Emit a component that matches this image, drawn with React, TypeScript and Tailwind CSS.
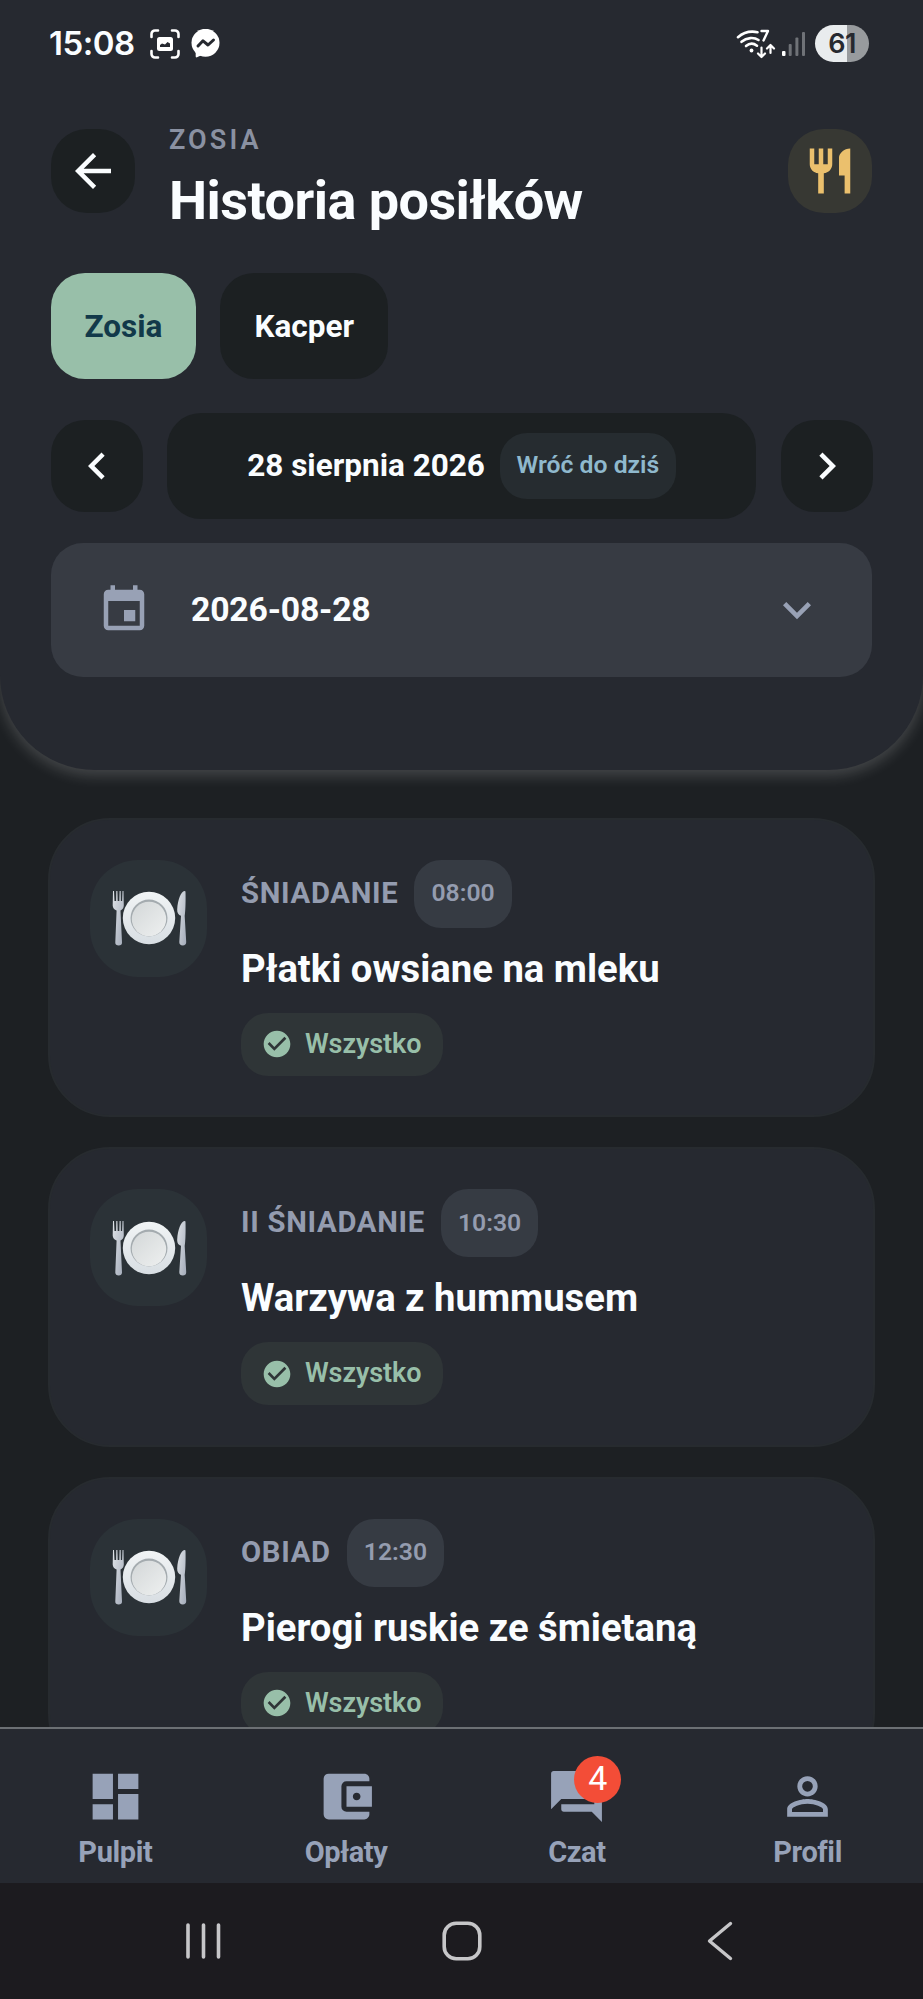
import React from "react";
import {
  MdAccountBalanceWallet,
  MdArrowBack,
  MdCheckCircle,
  MdChevronLeft,
  MdChevronRight,
  MdDashboard,
  MdEvent,
  MdForum,
  MdKeyboardArrowDown,
  MdPersonOutline,
  MdRestaurant,
} from "react-icons/md";

interface Meal {
  id: number;
  type: string;
  time: string;
  name: string;
  status: string;
}

const meals: Meal[] = [
  { id: 1, type: "ŚNIADANIE", time: "08:00", name: "Płatki owsiane na mleku", status: "Wszystko" },
  { id: 2, type: "II ŚNIADANIE", time: "10:30", name: "Warzywa z hummusem", status: "Wszystko" },
  { id: 3, type: "OBIAD", time: "12:30", name: "Pierogi ruskie ze śmietaną", status: "Wszystko" },
];

const tabs = [
  { label: "Pulpit", icon: MdDashboard, badge: 0 },
  { label: "Opłaty", icon: MdAccountBalanceWallet, badge: 0 },
  { label: "Czat", icon: MdForum, badge: 4 },
  { label: "Profil", icon: MdPersonOutline, badge: 0 },
];

const StatusBar: React.FC = () => (
  <div className="flex h-[87px] items-center justify-between pr-[54px] pl-[49px]">
    <div className="flex items-center">
      <span className="w-[101px] font-['Inter'] text-[33px] leading-none font-semibold tracking-[-0.5px]">15:08</span>
      <svg className="h-[30px] w-[30px]" viewBox="0 0 30 30" fill="none">
        <path
          d="M1.5 8V5A3.5 3.5 0 0 1 5 1.5h3M22 1.5h3A3.5 3.5 0 0 1 28.5 5v3M28.5 22v3a3.5 3.5 0 0 1-3.5 3.5h-3M8 28.5H5A3.5 3.5 0 0 1 1.5 25v-3"
          stroke="#fff"
          strokeWidth="2.6"
          strokeLinecap="round"
        />
        <rect x="7" y="8" width="16" height="14" rx="2.5" fill="#fff" />
        <path d="M10 18v-2l2-1.500 3 1 2.500-2.500 2.500 1.500V18z" fill="#262930" />
      </svg>
      <svg className="ml-[11px] h-[29px] w-[29px]" viewBox="0 0 29 29">
        <circle cx="14.5" cy="13.8" r="14" fill="#fff" />
        <path d="M4.700 20v7.500c0 .8.600 1.100 1.300.8l6-2.800z" fill="#fff" />
        <path d="M7 17l5-5.200 5 4.200 5.500-5" fill="none" stroke="#262930" strokeWidth="3" strokeLinejoin="round" strokeLinecap="round" />
      </svg>
    </div>
    <div className="flex items-center">
      <svg className="h-[30px] w-[40px]" viewBox="0 0 40 30" fill="none" stroke="#fff" strokeWidth="2.600" strokeLinecap="round">
        <path d="M2 8.200C8 3 14.500 1.800 21.500 3.200" />
        <path d="M5.500 12.800c5.300-4.500 12.500-4.800 17-1.800" />
        <path d="M10 17c3.500-3 7.500-3 11-.3" />
        <circle cx="15.500" cy="21.500" r="1.900" fill="#fff" stroke="none" />
        <path d="M25.500 2H32l-4.500 9.500" strokeWidth="2.400" strokeLinejoin="round" />
        <path d="M25.500 18.500v9M22 24.500l3.500 3.500 3.500-3.500M34.500 24v-7.500M31 19.500l3.500-3.500 3.500 3.500" strokeWidth="2.200" strokeLinejoin="round" />
      </svg>
      <svg className="ml-[6px] h-[26px] w-[24px]" viewBox="0 0 24 26">
        <rect x="0" y="20" width="3.500" height="5" rx="1" fill="#fff" />
        <rect x="6.700" y="13" width="3" height="12" rx="1" fill="#6f7277" />
        <rect x="13.400" y="6.500" width="3" height="18.500" rx="1" fill="#6f7277" />
        <rect x="20" y="1" width="3" height="24" rx="1" fill="#6f7277" />
      </svg>
      <div className="ml-[9px] flex h-[37px] w-[54px] items-center justify-center overflow-hidden rounded-full bg-[linear-gradient(to_right,#e9ecee_60%,#989b9e_60%)] font-['Inter'] text-[27px] leading-none font-semibold tracking-[-0.5px] text-[#262930]">
        61
      </div>
    </div>
  </div>
);

const PlateIcon: React.FC = () => (
  <svg className="h-[58px] w-[76px]" viewBox="0 0 76 58">
    <defs>
      <linearGradient id="metal" x1="0" y1="0" x2="1" y2="1">
        <stop offset="0" stopColor="#dfe3e7" />
        <stop offset="1" stopColor="#a3abb9" />
      </linearGradient>
      <linearGradient id="rim" x1="0" y1="0" x2="0" y2="1">
        <stop offset="0" stopColor="#f1f4f5" />
        <stop offset="1" stopColor="#d8dee3" />
      </linearGradient>
      <linearGradient id="dish" x1="0" y1="0" x2="1" y2="1">
        <stop offset="0" stopColor="#d3d7d8" />
        <stop offset="1" stopColor="#eef0f0" />
      </linearGradient>
    </defs>
    <path
      d="M2 2h1l.5 10h1.600l.2-10h1.100l.3 10h1.600l.3-10h1.100l.2 10h1.200L11.500 2h1l.3 14.500c0 2.600-1.600 4.200-3.300 4.900l1.500 32c.1 2.200-1.300 3-3.300 3s-3.500-.8-3.400-3L5.600 21.400c-2.200-.7-3.800-2.300-3.900-4.900z"
      fill="url(#metal)"
    />
    <circle cx="38" cy="29" r="26.200" fill="url(#rim)" />
    <circle cx="38" cy="29" r="18.500" fill="#a4abaf" />
    <circle cx="38" cy="30" r="17.200" fill="url(#dish)" />
    <path
      d="M73.500 2c-3.600.8-6.700 8.500-7.300 18.500-.2 3.500 1.200 5.300 3.800 6.300L68.300 53c-.1 2.400 1.300 3.400 3.500 3.400s3.500-1 3.400-3.400L73.700 27c1-6.500 1-18 .8-24.200 0-.6-.4-.9-1-.8z"
      fill="url(#metal)"
    />
  </svg>
);

const MealCard: React.FC<{ meal: Meal }> = ({ meal }) => (
  <div className="flex h-[299.6px] shrink-0 rounded-[62px] border-2 border-[#272b2f] bg-[#262930] px-[40px] pt-[40px]">
    <div className="flex h-[117px] w-[117px] shrink-0 items-center justify-center rounded-[48px] bg-[#2b3237]">
      <PlateIcon />
    </div>
    <div className="ml-[34px] flex flex-col items-start">
      <div className="flex h-[68px] items-center gap-[16px]">
        <span className="text-[29.25px] leading-none font-bold tracking-[0.7px] text-[#949caf]">{meal.type}</span>
        <span className="flex h-[68px] items-center rounded-[27px] bg-[#363b43] px-[17px] text-[24.75px] leading-none font-semibold text-[#949caf]">
          {meal.time}
        </span>
      </div>
      <h2 className="mt-[18px] text-[38.25px] leading-[46px] font-bold text-[#fafdff]">{meal.name}</h2>
      <div className="mt-[21px] flex h-[63px] items-center gap-[12px] rounded-[27px] bg-[#2f3537] pr-[22px] pl-[20px] text-[#98bfa9]">
        <MdCheckCircle className="h-[32px] w-[32px]" />
        <span className="text-[27px] leading-none font-semibold tracking-[-0.1px]">{meal.status}</span>
      </div>
    </div>
  </div>
);

const App: React.FC = () => {
  return (
    <div className="flex h-[1999px] w-[923px] flex-col overflow-hidden bg-[#1d2023] font-['Roboto',sans-serif] text-[#fafdff]">
      <div className="h-[1727px] shrink-0 overflow-hidden">
        <header className="h-[769.5px] rounded-b-[95px] bg-[#262930] shadow-[0_5px_14px_1px_rgba(255,255,255,0.17)]">
          <StatusBar />

          <div className="flex h-[186px] px-[51px] pt-[36px]">
            <button className="mt-[6px] flex h-[84px] w-[84px] shrink-0 items-center justify-center rounded-[36px] bg-[#1c2022]">
              <MdArrowBack className="h-[54px] w-[54px]" />
            </button>
            <div className="ml-[34px] flex-1">
              <p className="mt-[1px] text-[27px] leading-[32px] font-semibold tracking-[3.1px] text-[#8a91a2]">ZOSIA</p>
              <h1 className="mt-[15px] text-[54px] leading-[60px] font-bold tracking-[-0.55px]">Historia posiłków</h1>
            </div>
            <div className="mt-[6px] flex h-[84px] w-[84px] shrink-0 items-center justify-center rounded-[36px] bg-[#373833] text-[#ebc06d]">
              <MdRestaurant className="h-[54px] w-[54px]" />
            </div>
          </div>

          <div className="flex gap-[24px] px-[50.5px]">
            <button className="h-[106px] rounded-[34px] bg-[#98bfa9] px-[34px] pt-[1px] text-[31.5px] leading-none font-bold text-[#12394a]">
              Zosia
            </button>
            <button className="h-[106px] rounded-[34px] bg-[#1c2022] px-[34px] pt-[1px] text-[31.5px] leading-none font-bold">Kacper</button>
          </div>

          <div className="mt-[33.5px] flex items-center gap-[24.5px] px-[50.5px]">
            <button className="flex h-[92px] w-[92px] shrink-0 items-center justify-center rounded-[34px] bg-[#1c2022]">
              <MdChevronLeft className="h-[54px] w-[54px]" />
            </button>
            <div className="flex h-[106px] flex-1 items-center justify-center gap-[15px] rounded-[34px] bg-[#1c2022]">
              <span className="text-[31.5px] leading-none font-bold">28 sierpnia 2026</span>
              <span className="flex h-[66px] items-center rounded-[27px] bg-[#262c30] px-[16.5px] text-[24.75px] leading-none font-semibold text-[#8fb9cd]">
                Wróć do dziś
              </span>
            </div>
            <button className="flex h-[92px] w-[92px] shrink-0 items-center justify-center rounded-[34px] bg-[#1c2022]">
              <MdChevronRight className="h-[54px] w-[54px]" />
            </button>
          </div>

          <div className="mx-[51px] mt-[24.5px] flex h-[134px] items-center rounded-[32px] bg-[#373b43] px-[46px]">
            <MdEvent className="h-[54px] w-[54px] text-[#98a1b5]" />
            <span className="ml-[40px] flex-1 text-[33.75px] leading-none font-bold tracking-[-0.2px]">2026-08-28</span>
            <MdKeyboardArrowDown className="mr-[1px] h-[56px] w-[56px] text-[#98a1b5]" />
          </div>
        </header>

        <main className="flex flex-col gap-[30px] px-[48px] pt-[48px]">
          {meals.map(meal => (
            <MealCard key={meal.id} meal={meal} />
          ))}
        </main>
      </div>

      <nav className="flex h-[156px] shrink-0 border-t-2 border-[#6c7074] bg-[#262930]">
        {tabs.map(({ label, icon: Icon, badge }) => (
          <div key={label} className="flex flex-1 flex-col items-center pt-[37px] text-[#97a2b8]">
            <div className="relative">
              <Icon className="h-[61px] w-[61px]" />
              {badge > 0 && (
                <span className="absolute top-[-10px] left-[28px] flex h-[47px] w-[47px] items-center justify-center rounded-full bg-[#f34d37] pb-[3px] text-[34px] leading-none text-white">
                  {badge}
                </span>
              )}
            </div>
            <span className="mt-[8px] text-[29px] leading-[34px] font-bold tracking-[-0.4px]">{label}</span>
          </div>
        ))}
      </nav>

      {/* systemowy pasek nawigacji */}
      <div className="flex h-[116px] shrink-0 items-center justify-between bg-[#1c1b1f] px-[183px] text-[#c6c6c8]">
        <svg className="h-[42px] w-[41px]" viewBox="0 0 41 42" stroke="currentColor" strokeWidth="3.600" strokeLinecap="round">
          <path d="M5 5v32M20.500 5v32M35.500 5v32" />
        </svg>
        <svg className="h-[42px] w-[42px]" viewBox="0 0 42 42" fill="none" stroke="currentColor" strokeWidth="3.600">
          <rect x="3.200" y="3.200" width="35.600" height="35.600" rx="12" />
        </svg>
        <svg className="h-[42px] w-[41px]" viewBox="0 0 41 42" fill="none" stroke="currentColor" strokeWidth="3.400" strokeLinecap="round" strokeLinejoin="round">
          <path d="M31.500 3.500L10.500 21l21 17.500" />
        </svg>
      </div>
    </div>
  );
};

export default App;
